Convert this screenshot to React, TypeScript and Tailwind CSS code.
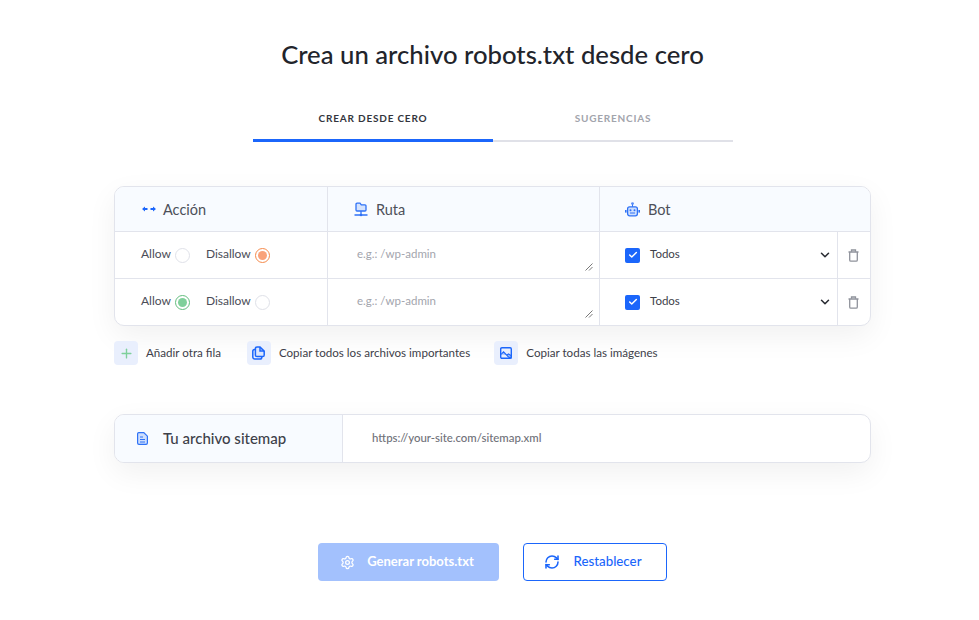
import { ChevronDown, Check, Plus, RefreshCw, Settings } from 'lucide-react'

function Radio({ on, color }: { on?: boolean; color?: 'orange' | 'green' }) {
  if (!on) return <span className="block w-[15px] h-[15px] rounded-full border border-[#dfe1e8] bg-white" />
  return (
    <span
      className={`flex items-center justify-center w-[15px] h-[15px] rounded-full border ${
        color === 'orange' ? 'border-[#f58a4b]' : 'border-[#63bd7e]'
      }`}
    >
      <span className={`block w-[9px] h-[9px] rounded-full ${color === 'orange' ? 'bg-[#f9a27a]' : 'bg-[#7fd09a]'}`} />
    </span>
  )
}

function TrashIcon() {
  return (
    <svg width="11" height="13" viewBox="0 0 11 13" fill="none" stroke="#8f929b" strokeWidth="1.3">
      <path d="M0.5 3 H10.5" />
      <path d="M3.5 2.8 V1 H7.5 V2.8" />
      <path d="M1.7 3 V11 A1.2 1.2 0 0 0 2.9 12.2 H8.1 A1.2 1.2 0 0 0 9.3 11 V3" />
    </svg>
  )
}

function Row({ allow }: { allow: boolean }) {
  return (
    <div className="flex h-[47px] border-t border-[#e2e4ec]">
      <div className="w-[213px] shrink-0 flex items-center pl-[26px] text-[12px] text-[#4a4d57] border-r border-[#e2e4ec]">
        <span className="mr-[4px] -mt-[2px]">Allow</span>
        <Radio on={allow} color="green" />
        <span className="ml-[16px] mr-[4px] -mt-[2px]">Disallow</span>
        <Radio on={!allow} color="orange" />
      </div>
      <div className="relative w-[272px] shrink-0 flex items-center pl-[29px] text-[11.5px] text-[#a3a5ad] border-r border-[#e2e4ec]">
        <span className="-mt-[2px]">e.g.: /wp-admin</span>
        <svg className="absolute right-[6px] bottom-[7px]" width="8" height="8" viewBox="0 0 8 8">
          <path d="M0.5 7.5 L7.5 0.5 M4 7.5 L7.5 4" stroke="#555" strokeWidth="0.8" fill="none" />
        </svg>
      </div>
      <div className="w-[238px] shrink-0 flex items-center pl-[25px] pr-[5px] border-r border-[#e2e4ec]">
        <span className="flex items-center justify-center w-[15px] h-[15px] rounded-[2px] bg-[#1b66fb]">
          <Check size={10} strokeWidth={3.5} className="text-white" />
        </span>
        <span className="ml-[10px] -mt-[2px] text-[11.5px] text-[#3d4049]">Todos</span>
        <ChevronDown size={14} strokeWidth={2.6} className="ml-auto text-[#2a2c33]" />
      </div>
      <div className="flex-1 flex items-center justify-center pr-[2px]">
        <TrashIcon />
      </div>
    </div>
  )
}

function ActionBtn({ icon, label, className }: { icon: React.ReactNode; label: string; className?: string }) {
  return (
    <div className={`flex items-center ${className ?? ''}`}>
      <span className="flex items-center justify-center w-6 h-6 rounded-[4px] bg-[#e9effd]">{icon}</span>
      <span className="ml-2 -mt-[1px] text-[11.6px] text-[#3d4049]">{label}</span>
    </div>
  )
}

export default function App() {
  return (
    <div className="w-[979px] h-[620px] bg-white overflow-hidden font-['Lato','Open_Sans',sans-serif]">
      <h1 className="pt-[38px] pl-[6px] text-center text-[25.7px] leading-[32px] font-medium text-[#22242b]">
        Crea un archivo robots.txt desde cero
      </h1>

      <div className="flex w-[480px] ml-[253px] mt-[38px]">
        <div className="w-1/2 h-[34px] flex items-start justify-center pt-[3px] border-b-[3px] border-[#1b66fb] text-[10px] leading-[14px] font-bold tracking-[0.8px] text-[#33353d]">
          CREAR DESDE CERO
        </div>
        <div className="w-1/2 h-[34px] flex items-start justify-center pt-[3px] border-b-[2px] border-[#e0e1e8] text-[10px] leading-[14px] font-bold tracking-[0.8px] text-[#a2a4ac]">
          SUGERENCIAS
        </div>
      </div>

      <div className="mx-[114px] w-[757px] mt-[44px] rounded-[10px] border border-[#e2e4ec] bg-white shadow-[0_10px_30px_rgba(0,0,0,0.06)] overflow-hidden">
        <div className="flex h-[44px] bg-[#f8fbff] text-[14.5px] text-[#4d5059]">
          <div className="w-[213px] shrink-0 flex items-center pl-[27px] border-r border-[#e2e4ec]">
            <svg width="14" height="6" viewBox="0 0 14 6" fill="#1b66fb">
              <path d="M0 3 L3 0.5 V2 H5.5 V4 H3 V5.5 Z M14 3 L11 0.5 V2 H8.5 V4 H11 V5.5 Z" />
            </svg>
            <span className="ml-[7px] pt-[1px]">Acción</span>
          </div>
          <div className="w-[272px] shrink-0 flex items-center pl-[26px] border-r border-[#e2e4ec]">
            <svg width="14" height="15" viewBox="0 0 14 15" fill="none" stroke="#2f72f6" strokeWidth="1.3">
              <path d="M2 2.2 A1 1 0 0 1 3 1.2 H6 L7.3 2.8 H11 A1 1 0 0 1 12 3.8 V8 A1 1 0 0 1 11 9 H3 A1 1 0 0 1 2 8 Z" fill="#d5e3fd" />
              <path d="M7 9 V12.5 M0.5 13 H13.5" />
              <circle cx="7" cy="13" r="1.3" fill="#2f72f6" stroke="none" />
            </svg>
            <span className="ml-[8px] pt-[1px]">Ruta</span>
          </div>
          <div className="flex-1 flex items-center pl-[25px]">
            <svg width="15" height="15" viewBox="0 0 15 15">
              <circle cx="7.5" cy="1.6" r="1.4" fill="#5b8ff7" />
              <rect x="7" y="2.5" width="1" height="2.5" fill="#2f72f6" />
              <rect x="2.6" y="4.8" width="9.8" height="9" rx="2" fill="#cfdffd" stroke="#2f72f6" strokeWidth="1.3" />
              <rect x="0" y="8" width="1.6" height="2.6" fill="#2f72f6" />
              <rect x="13.4" y="8" width="1.6" height="2.6" fill="#2f72f6" />
              <circle cx="5.5" cy="8.2" r="1" fill="#2f72f6" />
              <circle cx="9.5" cy="8.2" r="1" fill="#2f72f6" />
              <path d="M5 11 H10" stroke="#2f72f6" strokeWidth="1" />
            </svg>
            <span className="ml-[8px] pt-[1px]">Bot</span>
          </div>
        </div>
        <Row allow={false} />
        <Row allow={true} />
      </div>

      <div className="flex items-center ml-[114px] mt-[15px]">
        <ActionBtn icon={<Plus size={15} strokeWidth={2.2} className="text-[#7ed09b]" />} label="Añadir otra fila" />
        <ActionBtn
          className="ml-[26px]"
          label="Copiar todos los archivos importantes"
          icon={
            <svg width="13" height="14" viewBox="0 0 13 14" fill="none" stroke="#1b66fb" strokeWidth="1.5">
              <path d="M3.4 3.5 H2.6 A1.8 1.8 0 0 0 0.8 5.3 V11 A2 2 0 0 0 2.8 13 H8 A1.8 1.8 0 0 0 9.8 11.2 V10.6" />
              <path d="M5 0.9 H8 L12.2 5.1 V9 A1.6 1.6 0 0 1 10.6 10.6 H5 A1.6 1.6 0 0 1 3.4 9 V2.5 A1.6 1.6 0 0 1 5 0.9 Z" fill="#dbe6fd" />
              <path d="M8 1 V5.1 H12" />
            </svg>
          }
        />
        <ActionBtn
          className="ml-[24px]"
          label="Copiar todas las imágenes"
          icon={
            <svg width="12" height="12" viewBox="0 0 12 12" fill="none" stroke="#1b66fb" strokeWidth="1.4">
              <rect x="0.7" y="0.7" width="10.6" height="10.6" rx="1.2" fill="#e9effd" />
              <path d="M1 7.5 L3.5 4.8 L8.5 10 L11 11 V8.5 L8.5 7 L7 8" fill="#9dbdfb" strokeWidth="1.1" />
            </svg>
          }
        />
      </div>

      <div className="flex mx-[114px] w-[757px] h-[49px] mt-[49px] rounded-[10px] border border-[#e2e4ec] bg-white shadow-[0_10px_30px_rgba(0,0,0,0.06)] overflow-hidden">
        <div className="w-[228px] shrink-0 flex items-center pl-[22px] bg-[#f8fbff] border-r border-[#e2e4ec]">
          <svg width="11" height="13" viewBox="0 0 11 13">
            <path d="M1.8 0.6 H6.8 L10.4 4.2 V11 A1.4 1.4 0 0 1 9 12.4 H2 A1.4 1.4 0 0 1 0.6 11 V1.8 A1.2 1.2 0 0 1 1.8 0.6 Z" fill="#cfdffd" stroke="#2f72f6" strokeWidth="1.2" />
            <path d="M3 5 H6 M3 7.5 H8 M3 10 H8" stroke="#2f72f6" strokeWidth="1" />
          </svg>
          <span className="ml-[15px] -mt-[1px] text-[15px] font-medium text-[#3d4049]">Tu archivo sitemap</span>
        </div>
        <div className="flex items-center pl-[29px] -mt-[1px] text-[11.4px] font-medium text-[#6f7179]">
          https://your-site.com/sitemap.xml
        </div>
      </div>

      <div className="flex ml-[318px] mt-[80px] gap-[24px]">
        <div className="flex items-center justify-center w-[181px] h-[38px] rounded-[4px] bg-[#a3c1fd] text-white text-[13px] font-bold pr-[3px]">
          <Settings size={15} strokeWidth={2} className="mr-[12px]" />
          Generar robots.txt
        </div>
        <div className="flex items-center justify-center w-[144px] h-[38px] rounded-[4px] border border-[#1b66fb] text-[#1b66fb] text-[13.3px] font-medium pr-[4px]">
          <RefreshCw size={16} strokeWidth={2.3} className="mr-[13px]" />
          Restablecer
        </div>
      </div>
    </div>
  )
}
